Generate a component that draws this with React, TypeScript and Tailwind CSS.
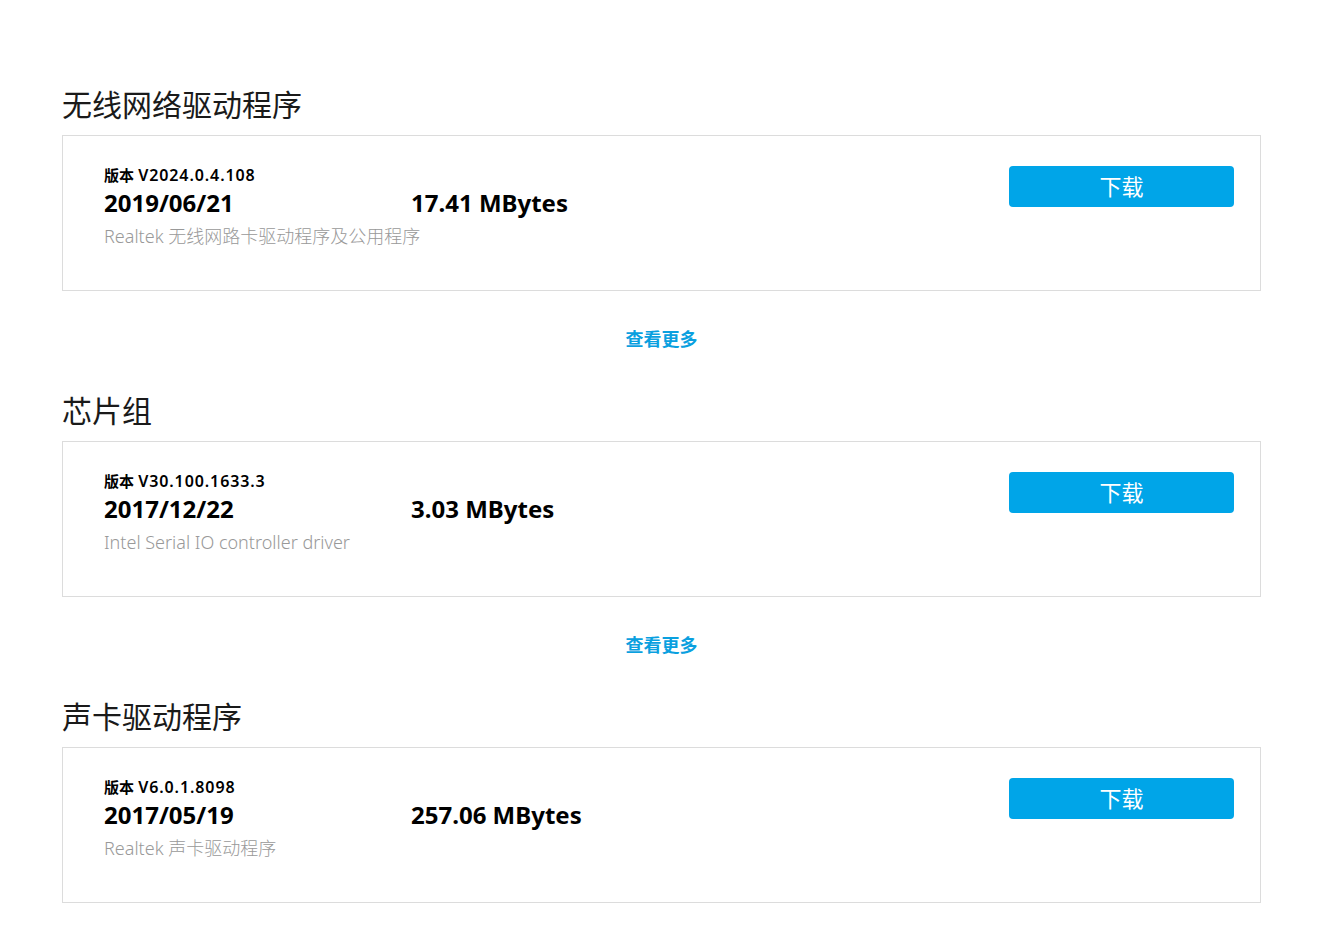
import React from "react";

type Driver = {
  title: string;
  version: string;
  date: string;
  size: string;
  desc: string;
};

const drivers: Driver[] = [
  {
    title: "无线网络驱动程序",
    version: "V2024.0.4.108",
    date: "2019/06/21",
    size: "17.41 MBytes",
    desc: "Realtek 无线网路卡驱动程序及公用程序",
  },
  {
    title: "芯片组",
    version: "V30.100.1633.3",
    date: "2017/12/22",
    size: "3.03 MBytes",
    desc: "Intel Serial IO controller driver",
  },
  {
    title: "声卡驱动程序",
    version: "V6.0.1.8098",
    date: "2017/05/19",
    size: "257.06 MBytes",
    desc: "Realtek 声卡驱动程序",
  },
];

function Section({ d, last }: { d: Driver; last: boolean }) {
  return (
    <div>
      <h2 className="text-[30px] leading-[41px] font-normal text-[#1a1a1a] mb-[10px]">
        {d.title}
      </h2>
      <div className="h-[156px] border border-[#dcdcdc] flex items-start justify-between pt-[28px] pl-[41px] pr-[26px]">
        <div className="flex flex-col">
          <div className="leading-[22px] font-semibold text-black whitespace-nowrap">
            <span className="text-[15px]">版本</span>{" "}
            <span className="text-[16px] tracking-[0.9px]">{d.version}</span>
          </div>
          <div className="flex leading-[33px] font-bold text-[24px] text-black">
            <div className="w-[307px]">{d.date}</div>
            <div>{d.size}</div>
          </div>
          <div className="mt-[5px] text-[18px] leading-[25px] font-light text-[#999999]">
            {d.desc}
          </div>
        </div>
        <button className="mt-[2px] w-[225px] h-[41px] rounded-[4px] bg-[#00a5e8] text-white text-[22px] leading-[41px] font-normal">
          下载
        </button>
      </div>
      {!last && (
        <div className="pt-[36px] pb-[38px] text-center">
          <span className="text-[18px] leading-[25px] font-bold text-[#0aa0df] inline-block">
            查看更多
          </span>
        </div>
      )}
    </div>
  );
}

export default function App() {
  return (
    <div
      className="min-h-[933px] bg-white"
      style={{ fontFamily: '"Noto Sans", "Noto Sans CJK SC", sans-serif' }}
    >
      <div className="ml-[62px] w-[1199px] pt-[84px]">
        {drivers.map((d, i) => (
          <Section key={d.title} d={d} last={i === drivers.length - 1} />
        ))}
      </div>
    </div>
  );
}
